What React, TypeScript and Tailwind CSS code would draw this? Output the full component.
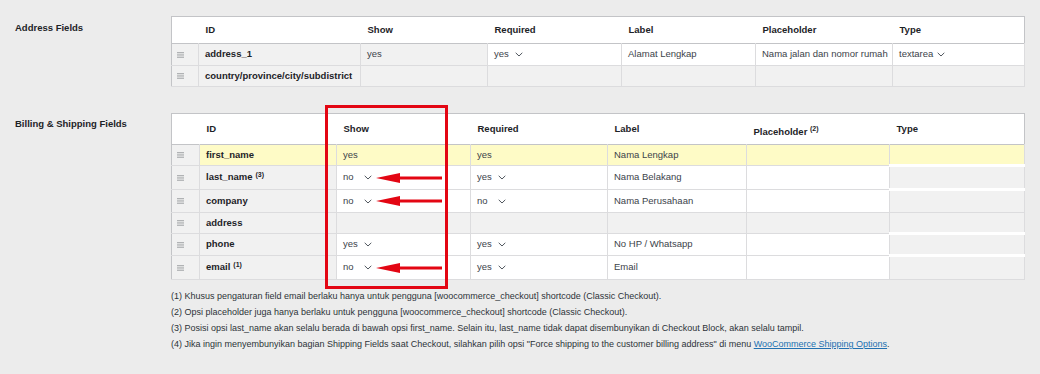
import React from 'react';

type Cell = {
  text?: string;
  select?: boolean;
  bold?: boolean;
  sup?: string;
  white?: boolean;
  arrow?: boolean;
  inset?: boolean;
};

type Row = { h: string; yellow?: boolean; cells: Cell[] };

const Handle = () => (
  <svg width="7" height="6" viewBox="0 0 7 6" className="ml-[5px] block">
    <rect x="0" y="0" width="7" height="1.3" fill="#b0b2b4" />
    <rect x="0" y="2.3" width="7" height="1.3" fill="#b0b2b4" />
    <rect x="0" y="4.6" width="7" height="1.3" fill="#b0b2b4" />
  </svg>
);

const Chevron = () => (
  <svg width="8" height="5" viewBox="0 0 8 5" className="inline-block">
    <path d="M0.7 0.8 L4 4 L7.3 0.8" fill="none" stroke="#50575e" strokeWidth="1" />
  </svg>
);

const Arrow = () => (
  <svg width="66" height="11" viewBox="0 0 66 11" className="absolute left-[39px] top-1/2 -translate-y-1/2">
    <polygon points="0,5.5 24,0.5 24,10.5" fill="#e30613" />
    <rect x="20" y="4" width="46" height="3" fill="#e30613" />
  </svg>
);

const addressCols = ['27px', '162px', '127px', '134px', '134px', '137px', '132px'];
const billingCols = ['28px', '137px', '134px', '137px', '139px', '143px', '135px'];

const addressRows: Row[] = [
  {
    h: 'h-[22px]',
    cells: [
      { text: 'address_1', bold: true },
      { text: 'yes' },
      { text: 'yes', select: true, white: true },
      { text: 'Alamat Lengkap', white: true },
      { text: 'Nama jalan dan nomor rumah', white: true },
      { text: 'textarea', select: true, white: true },
    ],
  },
  {
    h: 'h-[21px]',
    cells: [{ text: 'country/province/city/subdistrict', bold: true }, {}, {}, {}, {}, {}],
  },
];

const billingRows: Row[] = [
  {
    h: 'h-[21px]',
    yellow: true,
    cells: [{ text: 'first_name', bold: true }, { text: 'yes' }, { text: 'yes' }, { text: 'Nama Lengkap' }, {}, {}],
  },
  {
    h: 'h-[24px]',
    cells: [
      { text: 'last_name', bold: true, sup: '(3)' },
      { text: 'no', select: true, white: true, arrow: true },
      { text: 'yes', select: true, white: true },
      { text: 'Nama Belakang', white: true },
      { white: true },
      { inset: true },
    ],
  },
  {
    h: 'h-[23px]',
    cells: [
      { text: 'company', bold: true },
      { text: 'no', select: true, white: true, arrow: true },
      { text: 'no', select: true, white: true },
      { text: 'Nama Perusahaan', white: true },
      { white: true },
      { inset: true },
    ],
  },
  {
    h: 'h-[21px]',
    cells: [{ text: 'address', bold: true }, {}, {}, {}, {}, {}],
  },
  {
    h: 'h-[22px]',
    cells: [
      { text: 'phone', bold: true },
      { text: 'yes', select: true, white: true },
      { text: 'yes', select: true, white: true },
      { text: 'No HP / Whatsapp', white: true },
      { white: true },
      { inset: true },
    ],
  },
  {
    h: 'h-[24px]',
    cells: [
      { text: 'email', bold: true, sup: '(1)' },
      { text: 'no', select: true, white: true, arrow: true },
      { text: 'yes', select: true, white: true },
      { text: 'Email', white: true },
      { white: true },
      { inset: true },
    ],
  },
];

const FieldTable = ({
  cols,
  headH,
  headers,
  rows,
}: {
  cols: string[];
  headH: string;
  headers: React.ReactNode[];
  rows: Row[];
}) => (
  <table className="table-fixed border-collapse border border-[#c3c4c7] bg-white" style={{ width: 853 }}>
    <colgroup>
      {cols.map((w, i) => (
        <col key={i} style={{ width: w }} />
      ))}
    </colgroup>
    <thead>
      <tr className={`${headH} border-b border-[#c3c4c7]`}>
        <th />
        {headers.map((h, i) => (
          <th key={i} className="pl-[7px] pr-2 text-left font-bold text-[#1d2327]">
            {h}
          </th>
        ))}
      </tr>
    </thead>
    <tbody>
      {rows.map((row, ri) => (
        <tr key={ri} className={`${row.h} border-b border-[#dcdcde]`}>
          <td className="border-r border-[#dcdcde] bg-[#f1f1f1] p-0">
            <Handle />
          </td>
          {row.cells.map((c, ci) => {
            const bg = row.yellow ? 'bg-[#fefbc6]' : c.white ? 'bg-white' : 'bg-[#f1f1f1]';
            return (
              <td
                key={ci}
                className={`relative border-r border-[#dcdcde] p-0 ${bg} ${c.inset ? 'border-t-[3px] border-t-white' : ''}`}
              >
                {c.text && (
                  <div
                    className={`overflow-hidden whitespace-nowrap pl-[6px] ${
                      c.bold ? 'font-bold text-[#1d2327]' : 'text-[#3c434a]'
                    }`}
                  >
                    {c.select ? (
                      <span className="inline-flex items-center gap-[4px]">
                        <span className="min-w-[17px]">{c.text}</span>
                        <Chevron />
                      </span>
                    ) : (
                      c.text
                    )}
                    {c.sup && <sup className="ml-[3px] text-[7px] font-bold">{c.sup}</sup>}
                  </div>
                )}
                {c.arrow && <Arrow />}
              </td>
            );
          })}
        </tr>
      ))}
    </tbody>
  </table>
);

export default function App() {
  return (
    <div
      className="min-h-[374px] w-[1040px] bg-[#ececec] text-[9.5px] text-[#2c3338]"
      style={{ fontFamily: '"Liberation Sans", Arial, sans-serif' }}
    >
      <div className="flex pl-[15px] pt-[16px]">
        <div className="w-[156px] pt-[5px] text-[9.5px] font-bold text-[#1d2327]">Address Fields</div>
        <FieldTable
          cols={addressCols}
          headH="h-[27px]"
          headers={['ID', 'Show', 'Required', 'Label', 'Placeholder', 'Type']}
          rows={addressRows}
        />
      </div>

      <div className="mt-[26px] flex pl-[15px]">
        <div className="w-[156px] pt-[4px] text-[9.5px] font-bold text-[#1d2327]">Billing &amp; Shipping Fields</div>
        <div>
          <div className="relative">
            <FieldTable
              cols={billingCols}
              headH="h-[31px]"
              headers={[
                'ID',
                'Show',
                'Required',
                'Label',
                <span className="relative top-[3px]">
                  Placeholder <sup className="text-[7px]">(2)</sup>
                </span>,
                'Type',
              ]}
              rows={billingRows}
            />
            <div className="pointer-events-none absolute left-[154px] top-[-8px] h-[184px] w-[123px] border-[3px] border-[#e30613]" />
          </div>
          <div className="mt-[10px] flex flex-col gap-[3px] text-[9px] leading-[13px] text-[#2c3338]">
            <p>(1) Khusus pengaturan field email berlaku hanya untuk pengguna [woocommerce_checkout] shortcode (Classic Checkout).</p>
            <p>(2) Opsi placeholder juga hanya berlaku untuk pengguna [woocommerce_checkout] shortcode (Classic Checkout).</p>
            <p>
              (3) Posisi opsi last_name akan selalu berada di bawah opsi first_name. Selain itu, last_name tidak dapat disembunyikan di
              Checkout Block, akan selalu tampil.
            </p>
            <p>
              (4) Jika ingin menyembunyikan bagian Shipping Fields saat Checkout, silahkan pilih opsi "Force shipping to the customer
              billing address" di menu <a className="text-[#2271b1] underline">WooCommerce Shipping Options</a>.
            </p>
          </div>
        </div>
      </div>
    </div>
  );
}
